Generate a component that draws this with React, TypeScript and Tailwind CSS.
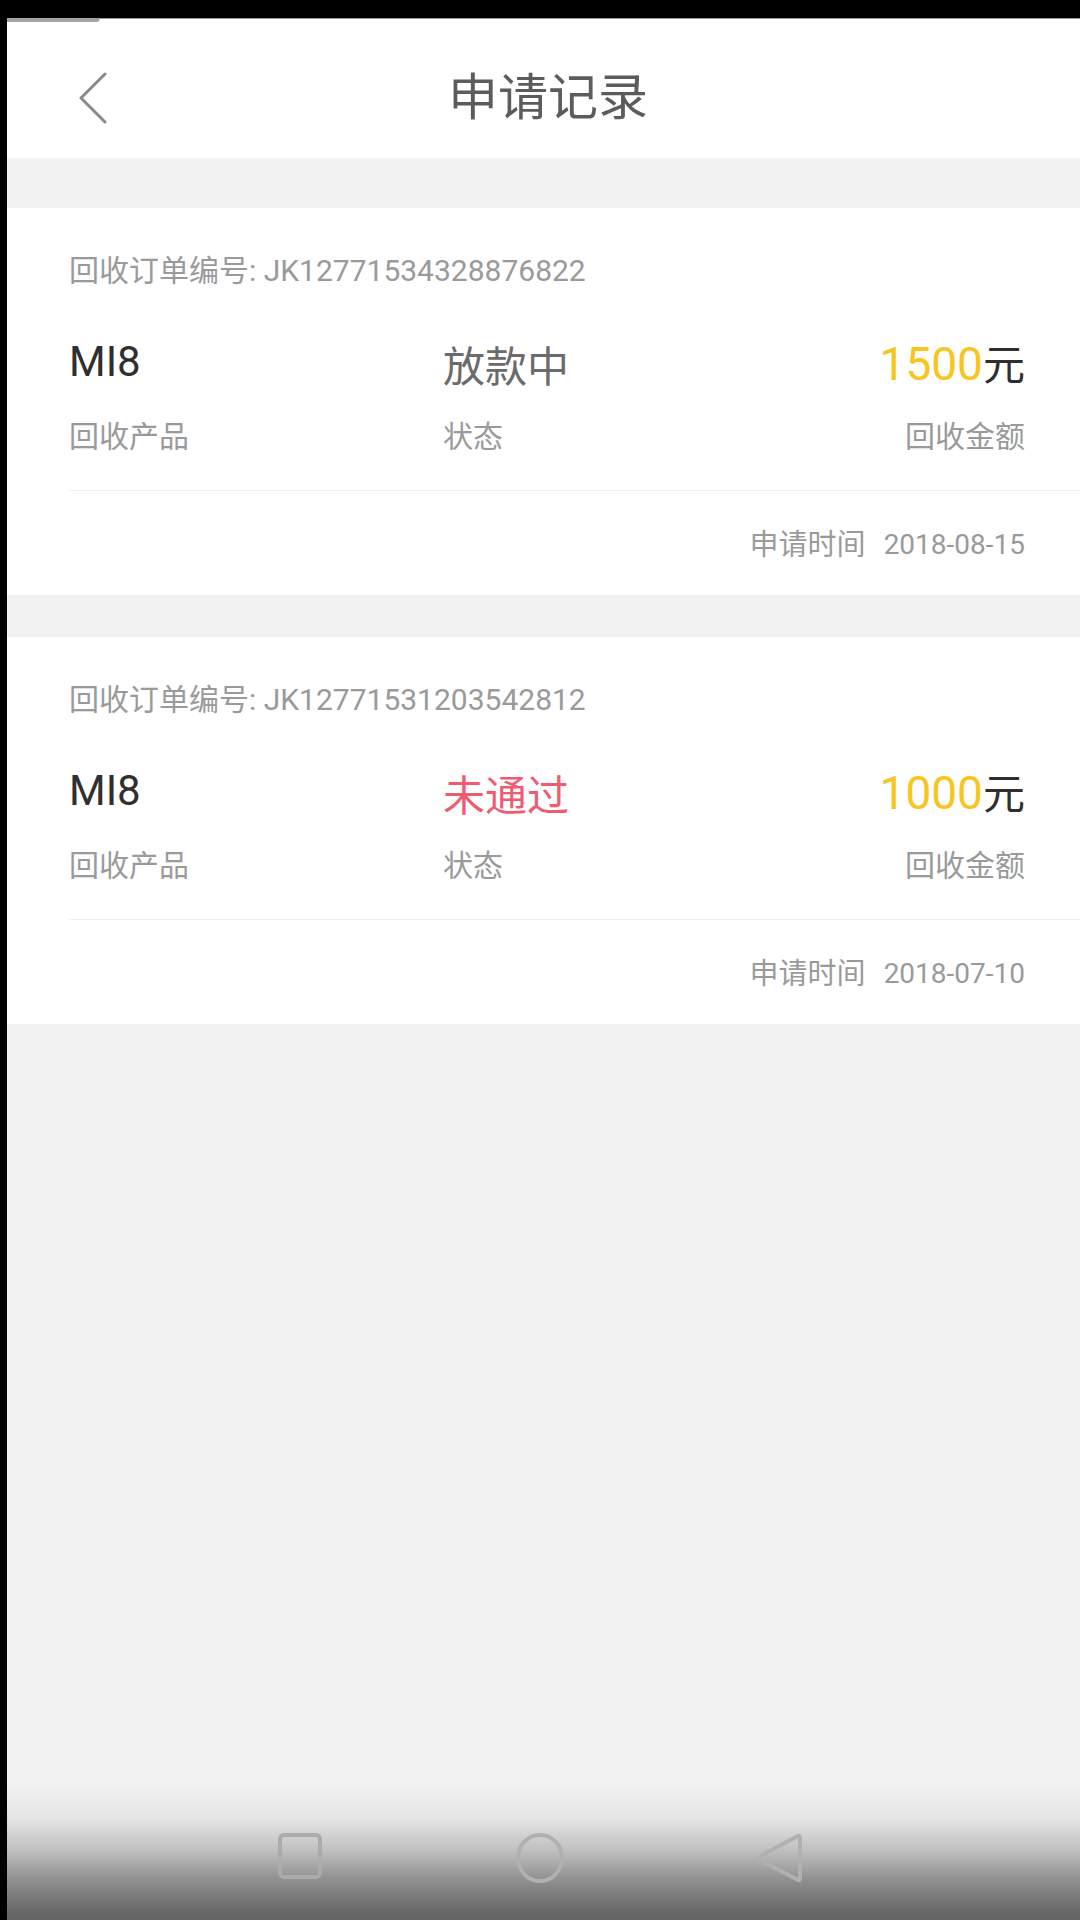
import React from "react";

const FONT = { fontFamily: "Roboto, 'Noto Sans CJK SC', 'Noto Sans', sans-serif" };

type Rec = {
  no: string;
  product: string;
  status: string;
  statusClass: string;
  amount: string;
  date: string;
};

const records: Rec[] = [
  {
    no: "JK12771534328876822",
    product: "MI8",
    status: "放款中",
    statusClass: "text-[#6b6b6b]",
    amount: "1500",
    date: "2018-08-15",
  },
  {
    no: "JK12771531203542812",
    product: "MI8",
    status: "未通过",
    statusClass: "text-[#ee5c72]",
    amount: "1000",
    date: "2018-07-10",
  },
];

function Card({ r }: { r: Rec }) {
  return (
    <div className="bg-white pl-[62px] pt-[45px] pb-[33px]">
      <div className="pr-[55px] h-[36px] flex items-center text-[30px] leading-none text-[#9a9a9a]">
        回收订单编号: {r.no}
      </div>
      <div className="pr-[55px] mt-[52px] h-[50px] flex items-start">
        <div className="w-[374px] text-[42px] leading-none text-[#2f2f2f]">{r.product}</div>
        <div className={`text-[42px] leading-none mt-[6px] ${r.statusClass}`}>{r.status}</div>
        <div className="flex-1 flex justify-end items-baseline leading-none">
          <span className="text-[46px] text-[#f7c51e]">{r.amount}</span>
          <span className="text-[42px] text-[#2f2f2f]">元</span>
        </div>
      </div>
      <div className="pr-[55px] mt-[28px] h-[36px] flex items-center text-[30px] leading-none text-[#9a9a9a]">
        <div className="w-[374px]">回收产品</div>
        <div>状态</div>
        <div className="flex-1 text-right">回收金额</div>
      </div>
      <div className="mt-[35px] h-px bg-[#efefef]" />
      <div className="pr-[55px] mt-[37px] h-[34px] flex items-center justify-end text-[28px] leading-none text-[#9a9a9a] gap-[18px]">
        <span className="text-[29px]">申请时间</span>
        <span>{r.date}</span>
      </div>
    </div>
  );
}

export default function App() {
  return (
    <div className="w-[1080px] h-[1920px] bg-black flex flex-col overflow-hidden" style={FONT}>
      <div className="h-[18px] bg-black shrink-0" />
      <div className="flex-1 flex min-h-0">
        <div className="w-[7px] bg-black shrink-0" />
        <div className="flex-1 flex flex-col bg-[#f2f2f2] min-w-0">
          {/* header */}
          <div className="h-[140px] bg-white shrink-0 flex flex-col">
            <div className="h-[4px] flex">
              <div className="w-[93px] h-[4px] bg-[#a3a3a3] rounded-br-[8px]" />
              <div className="flex-1 h-px bg-[#9a9a9a]" />
            </div>
            <div className="flex-1 grid grid-cols-[1fr_auto_1fr] items-center pt-[16px]">
              <div className="pl-[72px] flex items-center">
                <svg width="28" height="52" viewBox="0 0 28 52" fill="none">
                  <polyline
                    points="26,2 2,26 26,50"
                    stroke="#8a8a8a"
                    strokeWidth="3"
                    strokeLinecap="round"
                    strokeLinejoin="round"
                  />
                </svg>
              </div>
              <div className="pl-[9px] text-[50px] leading-none text-[#5c5c5c]">申请记录</div>
              <div />
            </div>
          </div>
          {/* content */}
          <div className="flex-1 min-h-0 flex flex-col pt-[50px] gap-[42px]">
            {records.map((r) => (
              <Card key={r.no} r={r} />
            ))}
          </div>
          {/* nav bar */}
          <div className="h-[140px] shrink-0 bg-[linear-gradient(to_bottom,#f2f2f2_0%,#e4e4e4_28%,#c0c0c0_50%,#909090_71%,#6a6a6a_93%,#646464_100%)] flex items-start pl-[271px] pt-[53px] gap-[193px]">
            <svg width="44" height="46" viewBox="0 0 44 46" fill="none">
              <rect x="2" y="2" width="40" height="42" rx="4" stroke="#ababab" strokeWidth="4" />
            </svg>
            <svg width="50" height="50" viewBox="0 0 50 50" fill="none">
              <ellipse cx="25" cy="25" rx="22" ry="23" stroke="#b0b0b0" strokeWidth="4" />
            </svg>
            <svg width="44" height="50" viewBox="0 0 44 50" fill="none">
              <path
                d="M40 3 L4 22 Q0 25 4 28 L40 47 Q42 48 42 45 L42 5 Q42 2 40 3 Z"
                stroke="#b0b0b0"
                strokeWidth="4"
                strokeLinejoin="round"
              />
            </svg>
          </div>
        </div>
      </div>
    </div>
  );
}
